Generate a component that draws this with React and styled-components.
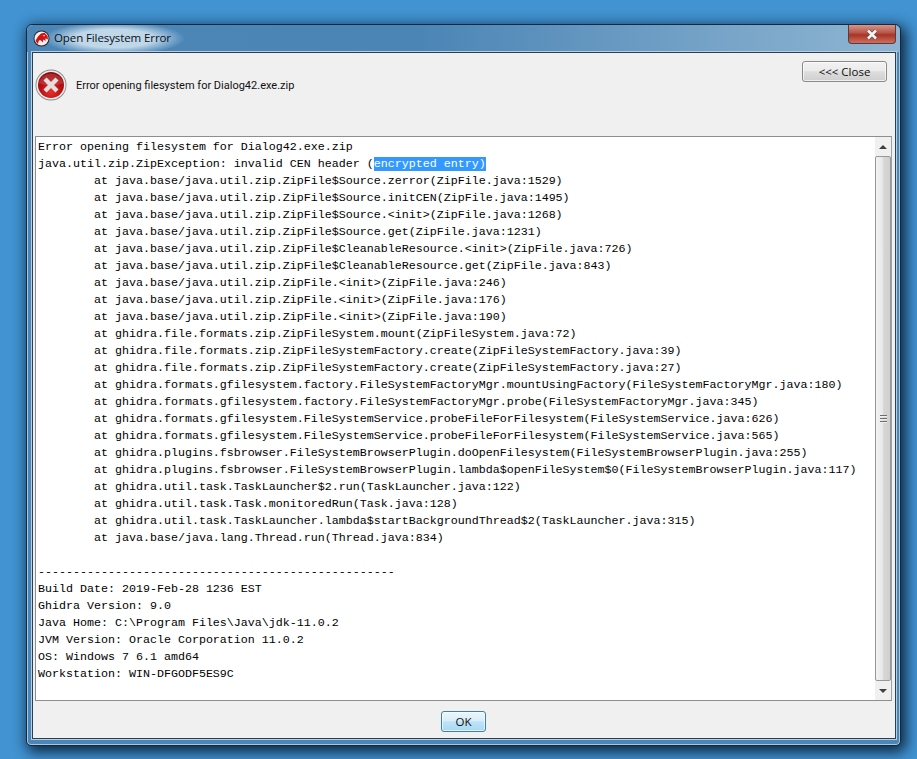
import React from 'react';
import styled, { createGlobalStyle } from 'styled-components';

const GlobalStyle = createGlobalStyle`
  html, body {
    margin: 0;
    height: 100%;
    overflow: hidden;
    background: #4193d1;
  }
`;

const Desktop = styled.div`
  width: 917px;
  height: 759px;
  box-sizing: border-box;
  padding: 24px 16px 13px 26px;
  background: #4193d1;
`;

const Frame = styled.div`
  height: 722px;
  box-sizing: border-box;
  display: flex;
  flex-direction: column;
  padding: 0 4px 6px 5px;
  border: 1px solid #16283a;
  border-radius: 6px 6px 5px 5px;
  background: #4a86b8;
  box-shadow: inset 0 0 0 1px #a9c8de, 3px 4px 14px 2px rgba(2, 20, 40, 0.85);
`;

const TitleBar = styled.div`
  height: 27px;
  flex: none;
  display: flex;
  align-items: center;
  margin: 0 -4px 0 -5px;
  padding: 0 4px 0 6px;
  border-radius: 6px 6px 0 0;
  background: linear-gradient(90deg, #4b86b7 0%, #4b85b6 45%, #7aa6c9 82%, #8fb5d2 100%);
`;

const Title = styled.div`
  margin-left: -7px;
  padding: 0 14px 0 11px;
  height: 27px;
  line-height: 26px;
  font-family: 'Open Sans', 'Liberation Sans', sans-serif;
  font-size: 11.5px;
  letter-spacing: -0.1px;
  color: #06101a;
  white-space: nowrap;
  background: radial-gradient(ellipse 50% 62% at 50% 50%, rgba(205, 224, 238, 0.9) 55%, rgba(205, 224, 238, 0) 100%);
`;

const CloseCaption = styled.div`
  width: 48px;
  height: 19px;
  margin-left: auto;
  margin-top: -8px;
  box-sizing: border-box;
  display: flex;
  align-items: center;
  justify-content: center;
  border: 1px solid #5a3a3a;
  border-top: none;
  border-radius: 0 0 4px 4px;
  background: linear-gradient(180deg, #d89488 0%, #b8584c 42%, #a83424 55%, #cf6f60 100%);
`;

const Content = styled.div`
  flex: 1;
  min-height: 0;
  display: flex;
  flex-direction: column;
  border: 1px solid #2a3f52;
  outline: 1px solid #b6cfe2;
  background: #f0f0f0;
`;

const Header = styled.div`
  height: 83px;
  flex: none;
  box-sizing: border-box;
  display: flex;
  align-items: flex-start;
  padding: 8px 8px 0 2px;
`;

const MessageRow = styled.div`
  display: flex;
  align-items: center;
  gap: 9px;
  margin-top: 8px;
`;

const Message = styled.div`
  font-family: 'Roboto', 'Liberation Sans', sans-serif;
  font-size: 11px;
  color: #101010;
`;

const Button = styled.button`
  height: 21px;
  width: ${(p) => p.$width}px;
  padding: 0;
  box-sizing: border-box;
  font-family: 'Open Sans', 'Liberation Sans', sans-serif;
  font-size: 11.5px;
  color: #101010;
  border-radius: 3px;
  border: 1px solid ${(p) => (p.$primary ? '#3c7fb1' : '#8a8a8a')};
  background: ${(p) =>
    p.$primary
      ? 'linear-gradient(180deg, #ecf6fc 0%, #d9eefa 45%, #bee3f7 52%, #a9d8f3 100%)'
      : 'linear-gradient(180deg, #f2f2f2 0%, #ebebeb 45%, #dddddd 52%, #cfcfcf 100%)'};
  box-shadow: inset 0 0 0 1px rgba(255, 255, 255, 0.65);
`;

const CloseButton = styled(Button)`
  margin-left: auto;
`;

const TracePanel = styled.div`
  flex: 1;
  min-height: 0;
  display: flex;
  margin: 0 3px 0 2px;
  border: 1px solid #8e8e8e;
  border-right-color: #a0a0a0;
  background: #fff;
`;

const Trace = styled.pre`
  flex: 1;
  margin: 0;
  padding: 2px 0 0 2px;
  font-family: 'Liberation Mono', 'Courier New', monospace;
  font-size: 11.67px;
  line-height: 17px;
  color: #000;
  overflow: hidden;
`;

const Selected = styled.span`
  background: #3399ff;
  color: #fff;
`;

const Scrollbar = styled.div`
  width: 16px;
  flex: none;
  display: flex;
  flex-direction: column;
  background: #f0f0f0;
`;

const ScrollArrow = styled.div`
  height: 19px;
  flex: none;
  display: flex;
  align-items: center;
  justify-content: center;
  &::before {
    content: '';
    border-left: 4px solid transparent;
    border-right: 4px solid transparent;
    ${(p) => (p.$down ? 'border-top: 4px solid #404040;' : 'border-bottom: 4px solid #404040;')}
  }
`;

const Thumb = styled.div`
  flex: 1;
  display: flex;
  flex-direction: column;
  align-items: center;
  justify-content: center;
  gap: 1px;
  border: 1px solid #979797;
  border-radius: 2px;
  background: linear-gradient(90deg, #f2f2f2 0%, #e9e9e9 45%, #d6d6d6 55%, #cfcfcf 100%);
`;

const Grip = styled.span`
  width: 7px;
  height: 2px;
  background: #6d6d6d;
  border-bottom: 1px solid #eee;
  box-sizing: border-box;
`;

const Footer = styled.div`
  height: 37px;
  flex: none;
  display: flex;
  justify-content: center;
  padding: 10px 1px 0 0;
  box-sizing: border-box;
`;

const GhidraIcon = () => (
  <svg width="17" height="17" viewBox="0 0 17 17" style={{ flex: 'none', position: 'relative', zIndex: 1 }}>
    <circle cx="8.5" cy="8.5" r="8" fill="#2b2424" />
    <circle cx="8.5" cy="8.5" r="7" fill="#f4f0f0" />
    <path d="M2.6 10.5 L5 6.5 L8 3.6 L11.5 2.8 L14.6 6 L15 9.5 L12.4 8.2 L12.6 11 L10.4 9.6 L9.6 12.6 L7.8 10.2 L5.8 10.6 L5 14 L3.6 12.6 Z" fill="#d01414" />
    <path d="M9.5 5.4 L12.2 5 L11.4 6.4 Z" fill="#fff" />
  </svg>
);

const ErrorIcon = () => (
  <svg width="32" height="32" viewBox="0 0 32 32" style={{ flex: 'none' }}>
    <defs>
      <radialGradient id="redFill" cx="50%" cy="75%" r="75%">
        <stop offset="0%" stopColor="#e8302c" />
        <stop offset="55%" stopColor="#b80f12" />
        <stop offset="100%" stopColor="#8c0a0c" />
      </radialGradient>
    </defs>
    <circle cx="16" cy="16" r="15.5" fill="#8b8b8b" />
    <circle cx="16" cy="16" r="14.6" fill="#efefef" />
    <circle cx="16" cy="16" r="13" fill="url(#redFill)" />
    <path d="M3.5 14 A13 13 0 0 1 28.5 14 Q16 19 3.5 14 Z" fill="#fff" opacity="0.14" />
    <path d="M10 10 L22 22 M22 10 L10 22" stroke="#e4dede" strokeWidth="4.4" strokeLinecap="butt" />
  </svg>
);

const before = `Error opening filesystem for Dialog42.exe.zip
java.util.zip.ZipException: invalid CEN header (`;

const after = `
        at java.base/java.util.zip.ZipFile$Source.zerror(ZipFile.java:1529)
        at java.base/java.util.zip.ZipFile$Source.initCEN(ZipFile.java:1495)
        at java.base/java.util.zip.ZipFile$Source.<init>(ZipFile.java:1268)
        at java.base/java.util.zip.ZipFile$Source.get(ZipFile.java:1231)
        at java.base/java.util.zip.ZipFile$CleanableResource.<init>(ZipFile.java:726)
        at java.base/java.util.zip.ZipFile$CleanableResource.get(ZipFile.java:843)
        at java.base/java.util.zip.ZipFile.<init>(ZipFile.java:246)
        at java.base/java.util.zip.ZipFile.<init>(ZipFile.java:176)
        at java.base/java.util.zip.ZipFile.<init>(ZipFile.java:190)
        at ghidra.file.formats.zip.ZipFileSystem.mount(ZipFileSystem.java:72)
        at ghidra.file.formats.zip.ZipFileSystemFactory.create(ZipFileSystemFactory.java:39)
        at ghidra.file.formats.zip.ZipFileSystemFactory.create(ZipFileSystemFactory.java:27)
        at ghidra.formats.gfilesystem.factory.FileSystemFactoryMgr.mountUsingFactory(FileSystemFactoryMgr.java:180)
        at ghidra.formats.gfilesystem.factory.FileSystemFactoryMgr.probe(FileSystemFactoryMgr.java:345)
        at ghidra.formats.gfilesystem.FileSystemService.probeFileForFilesystem(FileSystemService.java:626)
        at ghidra.formats.gfilesystem.FileSystemService.probeFileForFilesystem(FileSystemService.java:565)
        at ghidra.plugins.fsbrowser.FileSystemBrowserPlugin.doOpenFilesystem(FileSystemBrowserPlugin.java:255)
        at ghidra.plugins.fsbrowser.FileSystemBrowserPlugin.lambda$openFileSystem$0(FileSystemBrowserPlugin.java:117)
        at ghidra.util.task.TaskLauncher$2.run(TaskLauncher.java:122)
        at ghidra.util.task.Task.monitoredRun(Task.java:128)
        at ghidra.util.task.TaskLauncher.lambda$startBackgroundThread$2(TaskLauncher.java:315)
        at java.base/java.lang.Thread.run(Thread.java:834)

---------------------------------------------------
Build Date: 2019-Feb-28 1236 EST
Ghidra Version: 9.0
Java Home: C:\\Program Files\\Java\\jdk-11.0.2
JVM Version: Oracle Corporation 11.0.2
OS: Windows 7 6.1 amd64
Workstation: WIN-DFGODF5ES9C`;

export default function App() {
  return (
    <Desktop>
      <GlobalStyle />
      <Frame>
        <TitleBar>
          <GhidraIcon />
          <Title>Open Filesystem Error</Title>
          <CloseCaption>
            <svg width="16" height="11" viewBox="0 0 16 11">
              <path d="M4 1.5 L12 9.5 M12 1.5 L4 9.5" stroke="#4a4a4a" strokeWidth="3.8" />
              <path d="M4 1.5 L12 9.5 M12 1.5 L4 9.5" stroke="#f4f4f4" strokeWidth="2.6" />
            </svg>
          </CloseCaption>
        </TitleBar>
        <Content>
          <Header>
            <MessageRow>
              <ErrorIcon />
              <Message>Error opening filesystem for Dialog42.exe.zip</Message>
            </MessageRow>
            <CloseButton $width={85}>&lt;&lt;&lt; Close</CloseButton>
          </Header>
          <TracePanel>
            <Trace>
              {before}
              <Selected>encrypted entry)</Selected>
              {after}
            </Trace>
            <Scrollbar>
              <ScrollArrow />
              <Thumb>
                <Grip />
                <Grip />
                <Grip />
              </Thumb>
              <ScrollArrow $down />
            </Scrollbar>
          </TracePanel>
          <Footer>
            <Button $primary $width={45}>OK</Button>
          </Footer>
        </Content>
      </Frame>
    </Desktop>
  );
}
